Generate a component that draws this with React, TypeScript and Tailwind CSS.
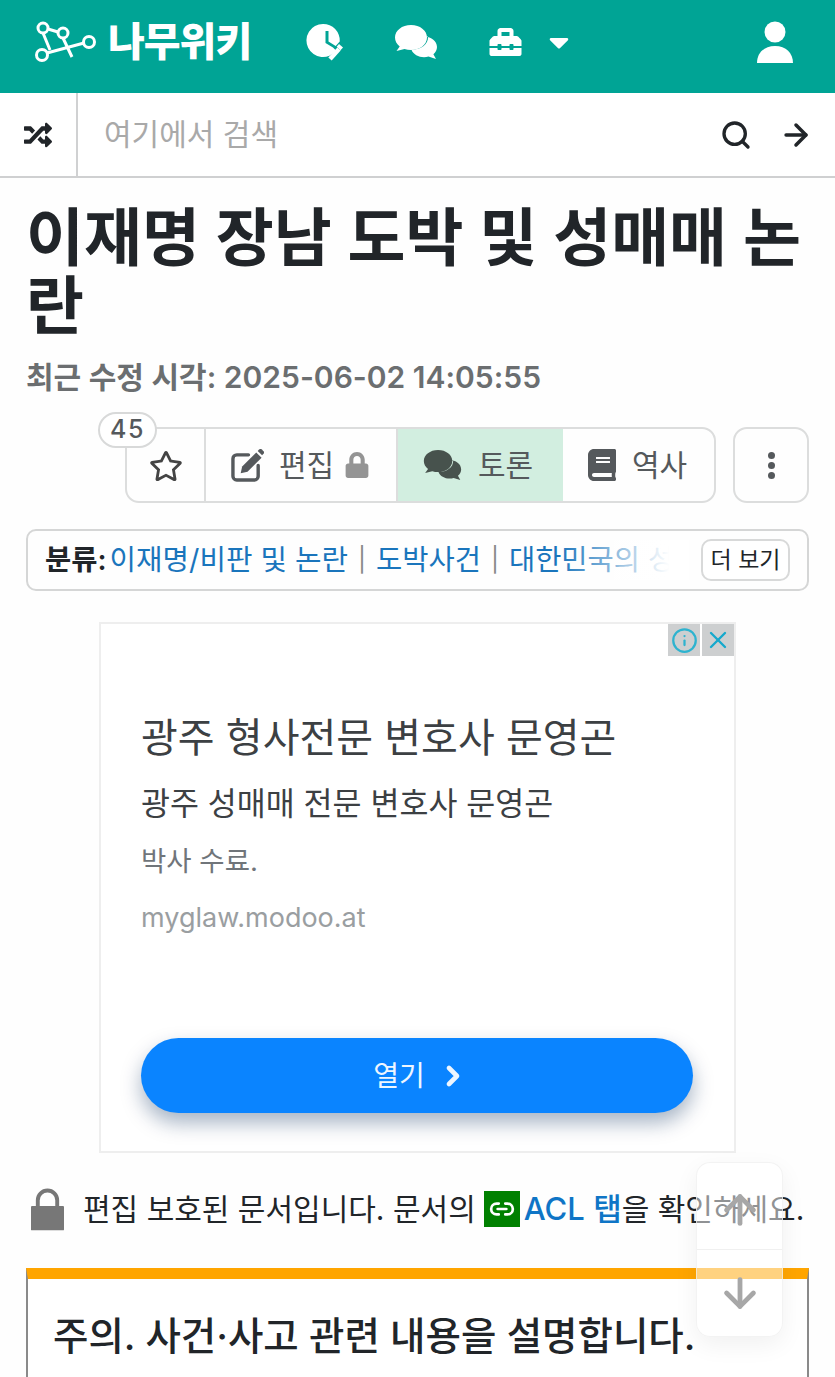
import React from "react";
import { FaRandom, FaToolbox, FaCaretDown, FaRegStar, FaLock, FaBook } from "react-icons/fa";
import { ArrowRight, ArrowUp, ArrowDown, ChevronRight, Info, Link2, Search, X } from "lucide-react";

const Bubbles = ({ className }: { className: string }) => (
  <svg viewBox="0 0 44 36" className={className} fill="currentColor">
    <path d="M17 1C8 1 1 6.500 1 13.500c0 3.500 1.800 6.700 4.700 9L2.500 27l8-2c2 .6 4.200 1 6.500 1 9 0 16-5.500 16-12.500S26 1 17 1z" />
    <path d="M30 12.500c6.800 0 13 4.500 13 10.500 0 2.900-1.400 5.400-3.600 7.200L42 35l-7.500-2.400c-1.400.4-3 .6-4.500.6-5.400 0-11-2.800-12.500-7.400 9 0 17-5 16.500-13.200-1.300-.3-2.700-.1-4-.1z" />
  </svg>
);

const ClockPen = () => (
  <svg viewBox="0 0 38 38" className="h-[38px] w-[38px]" fill="none">
    <path fill="#fff" d="M17 1a16.500 16.500 0 1 0 13 26.600l-3-3-7.500-4.600V8h3v10.500l7.200 4.500 4-4.500A16.500 16.500 0 0 0 17 1z" />
    <path stroke="#fff" strokeWidth="4.500" d="M24 36l9-10" />
    <path fill="#fff" d="M33 21l4 3.500-2.500 2.800-3.800-3.500z" />
  </svg>
);

const EditIcon = () => (
  <svg viewBox="0 0 34 34" className="h-[33px] w-[33px]" fill="none">
    <path stroke="currentColor" strokeWidth="3.500" strokeLinecap="round" d="M18 6H6a4 4 0 0 0-4 4v18a4 4 0 0 0 4 4h18a4 4 0 0 0 4-4V17" />
    <path fill="currentColor" d="M10 25l1.500-7L26 3.500l5.500 5.500L17 23.500z" />
    <path fill="currentColor" d="M27.500 2l1.500-1.500a2 2 0 0 1 2.800 0l1.700 1.700a2 2 0 0 1 0 2.800L32 6.500z" />
  </svg>
);

const Logo = () => (
  <div className="flex items-center">
    <svg viewBox="0 0 64 44" className="h-[44px] w-[64px]" fill="none" stroke="#fff" strokeWidth="3">
      <circle cx="9" cy="8" r="5" />
      <circle cx="29" cy="13" r="5" />
      <circle cx="8" cy="35" r="5.500" />
      <circle cx="55" cy="22" r="5.500" />
      <path d="M9 13l7 17M13 33l37-10M29 18l9 19M14 9l10 3" />
    </svg>
    <span className="ml-[10px] text-[40px] leading-none font-black tracking-[-1px] text-white">나무위키</span>
  </div>
);

export default function App() {
  return (
    <div className="relative h-[1377px] w-[835px] overflow-hidden bg-[#fefefe] font-['Inter','Noto_Sans_CJK_KR',sans-serif] text-[#212529]">
      <header className="flex h-[93px] items-center bg-[#00a495] pr-[42px] pb-[9px] pl-[34px] text-white">
        <Logo />
        <div className="ml-[55px]"><ClockPen /></div>
        <Bubbles className="ml-[50px] h-[36px] w-[44px]" />
        <FaToolbox className="ml-[49px] h-[32px] w-[37px]" />
        <FaCaretDown className="ml-[20px] h-[32px] w-[30px]" />
        <svg viewBox="0 0 36 42" className="ml-auto h-[42px] w-[36px]" fill="#fff">
          <circle cx="18" cy="11" r="10.500" />
          <path d="M0 42c0-10 7-17 18-17s18 7 18 17z" />
        </svg>
      </header>

      <div className="flex h-[85px] items-center border-b-2 border-[#cfd0d1] bg-white">
        <div className="flex h-full w-[78px] items-center justify-center border-r-2 border-[#d0d1d2] text-[#212529]">
          <FaRandom className="h-[28px] w-[30px]" />
        </div>
        <div className="ml-[26px] flex-1 text-[30px] text-[#a9a9a9]">여기에서 검색</div>
        <Search className="h-[32px] w-[32px] text-[#212529]" strokeWidth={2.500} />
        <ArrowRight className="mr-[22px] ml-[27px] h-[34px] w-[34px] text-[#212529]" strokeWidth={2.500} />
      </div>

      <main className="px-[26px]">
        <h1 className="mt-[25px] text-[63px] leading-[68px] font-semibold break-all text-[#212529]">이재명 장남 도박 및 성매매 논란</h1>

        <p className="mt-[18px] text-[30px] leading-[40px] font-semibold text-[#6b6e70]">
          최근 수정 시각: 2025-06-02 14:05:55
        </p>

        <div className="mt-[30px] flex justify-end">
          <div className="relative flex h-[76px] w-[591px] rounded-[14px] border-2 border-[#dcdddd] text-[30px] text-[#55595c]">
            <span className="absolute top-[-17px] left-[-29px] flex h-[36px] w-[59px] items-center justify-center rounded-full border-2 border-[#d8d9d9] bg-white text-[25px] font-medium tracking-[1.500px]">45</span>
            <div className="flex w-[79px] items-center justify-center border-r-2 border-[#dcdddd] pl-[1px]">
              <FaRegStar className="mt-[2px] h-[32px] w-[34px] text-[#444]" />
            </div>
            <div className="flex w-[192px] items-center border-r-2 border-[#dcdddd] pl-[25px]">
              <EditIcon />
              <span className="ml-[15px] leading-none">편집</span>
              <FaLock className="ml-[11px] h-[26px] w-[24px] text-[#949494]" />
            </div>
            <div className="flex w-[165px] items-center bg-[#d2eee0] pl-[24px]">
              <Bubbles className="h-[32px] w-[41px] text-[#47524d]" />
              <span className="ml-[15px] leading-none">토론</span>
            </div>
            <div className="flex flex-1 items-center pl-[25px]">
              <FaBook className="h-[32px] w-[28px]" />
              <span className="ml-[16px] leading-none">역사</span>
            </div>
          </div>
          <div className="ml-[17px] flex h-[76px] w-[76px] flex-col items-center justify-center gap-[3px] rounded-[14px] border-2 border-[#dcdddd]">
            <i className="h-[7px] w-[7px] rounded-full bg-[#55595c]" />
            <i className="h-[7px] w-[7px] rounded-full bg-[#55595c]" />
            <i className="h-[7px] w-[7px] rounded-full bg-[#55595c]" />
          </div>
        </div>

        <div className="mt-[26px] flex h-[62px] items-center rounded-[10px] border-2 border-[#d5d6d6] pr-[17px] pl-[17px]">
          <div className="relative flex min-w-0 flex-1 items-center overflow-hidden text-[28.500px] leading-[40px] whitespace-nowrap text-[#1a75bc]">
            <span className="font-semibold text-[#212529]">분류:</span>
            <span className="ml-[3px] text-[28.800px]">이재명/비판 및 논란</span>
            <span className="mx-[10px] text-[24px] text-[#888]">|</span>
            <span>도박사건</span>
            <span className="mx-[10px] text-[24px] text-[#888]">|</span>
            <span>대한민국의 성</span>
            <div className="absolute top-0 right-0 bottom-0 w-[130px] bg-gradient-to-r from-transparent via-white via-85% to-white" />
          </div>
          <div className="ml-[12px] flex h-[42px] w-[89px] shrink-0 items-center justify-center rounded-[10px] border-2 border-[#d8d9d9] bg-white text-[23px] text-[#212529]">더 보기</div>
        </div>

        <div className="mt-[31px] ml-[73px] h-[531px] w-[637px] border-2 border-[#eeeeee] bg-white">
          <div className="flex justify-end gap-[2px]">
            <span className="flex h-[32px] w-[32px] items-center justify-center bg-[#cdcfd0]"><Info className="h-[27px] w-[27px] text-[#2eb3cf]" strokeWidth={2} /></span>
            <span className="flex h-[32px] w-[32px] items-center justify-center bg-[#cdcfd0]"><X className="h-[28px] w-[28px] text-[#15a9cc]" strokeWidth={2} /></span>
          </div>
          <div className="px-[40px]">
            <p className="mt-[54px] text-[40px] leading-[56px] text-[#3c4043]">광주 형사전문 변호사 문영곤</p>
            <p className="mt-[16px] text-[31.500px] leading-[44px] text-[#3c4043]">광주 성매매 전문 변호사 문영곤</p>
            <p className="mt-[15px] text-[27.500px] leading-[40px] text-[#70757a]">박사 수료.</p>
            <p className="mt-[19px] text-[27px] leading-[36px] text-[#9a9ea1]">myglaw.modoo.at</p>
            <div className="mt-[102px] flex h-[75px] w-[552px] items-center justify-center rounded-full bg-[#0a84ff] pl-[8px] text-[28px] text-[#eef6ff] shadow-[0_10px_20px_rgba(0,40,90,0.35)]">
              열기
              <ChevronRight className="ml-[12px] h-[32px] w-[32px]" strokeWidth={3.500} />
            </div>
          </div>
        </div>

        <div className="mt-[34px] flex h-[44px] items-center text-[30px] whitespace-nowrap text-[#212529]">
          <svg viewBox="0 0 34 44" className="ml-[5px] h-[44px] w-[33px]" fill="#777">
            <path d="M5 20v-7a12 12 0 0 1 24 0v7h-4v-7a8 8 0 0 0-16 0v7z" />
            <rect x="0" y="19" width="34" height="25" rx="1" />
          </svg>
          <span className="ml-[19px]">편집 보호된 문서입니다. 문서의</span>
          <span className="ml-[8px] flex h-[36px] w-[36px] items-center justify-center bg-[#008000]"><Link2 className="h-[26px] w-[26px] text-white" strokeWidth={2.500} /></span>
          <span className="ml-[4px] text-[31px] font-medium text-[#0f75c6]">ACL 탭</span>
          <span>을 확인하세요.</span>
        </div>

        <div className="mt-[37px] h-[200px] border-x-2 border-t-[11px] border-[#8a8a8a] border-t-[#ffa500] bg-white pt-[31px] pl-[25px] text-[38.500px] leading-[52px] font-medium text-[#212529]">
          주의. 사건·사고 관련 내용을 설명합니다.
        </div>
      </main>

      <div className="absolute top-[1162px] left-[696px] flex h-[175px] w-[87px] flex-col rounded-[14px] border border-[#eeeeee]/70 bg-white/50 text-[#a7a7a7] shadow-[0_8px_24px_rgba(0,0,0,0.06)]">
        <div className="flex h-[87px] items-center justify-center border-b border-[#e9e9e9]/70 pt-[8px]"><ArrowUp className="h-[46px] w-[46px]" strokeWidth={2.500} /></div>
        <div className="flex flex-1 items-center justify-center"><ArrowDown className="h-[46px] w-[46px]" strokeWidth={2.500} /></div>
      </div>
    </div>
  );
}
